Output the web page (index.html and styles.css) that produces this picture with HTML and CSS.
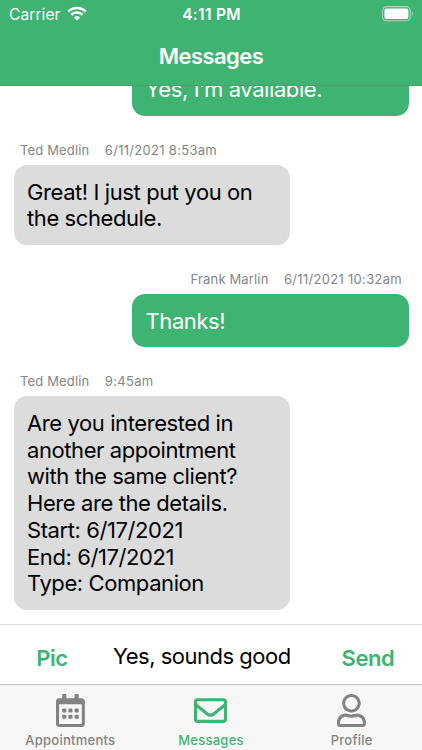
FILE: index.html
```html
<!DOCTYPE html>
<html lang="en">

<head>
    <meta charset="UTF-8" />
    <meta name="viewport" content="width=device-width, initial-scale=1.0" />
    <title>Messages</title>
    <link rel="stylesheet" href="styles.css">
</head>

<body>

    <header>
        <div class="status-bar">
            <div class="carrier">
                <span>Carrier</span>
                <svg class="wifi" viewBox="0 0 20 15">
                    <path d="M1.2 5.6a12.6 12.6 0 0 1 17.6 0" />
                    <path d="M4.3 8.8a8.2 8.2 0 0 1 11.4 0" />
                    <path class="dot" d="M6.9 11.5a4.6 4.6 0 0 1 6.2 0L10 14.6z" />
                </svg>
            </div>
            <div class="clock">4:11 PM</div>
            <div class="battery">
                <svg viewBox="0 0 32 16">
                    <rect class="shell" x="0.6" y="0.6" width="27.6" height="14.2" rx="4" />
                    <rect class="level" x="2.4" y="2.4" width="24" height="10.6" rx="2.2" />
                    <path class="tip" d="M29.8 5.4c1.5.6 1.5 4 0 4.6z" />
                </svg>
            </div>
        </div>
        <h1>Messages</h1>
    </header>

    <main class="chat">
        <div class="message sent">
            <div class="bubble">Yes, I’m available.</div>
        </div>

        <div class="message">
            <div class="meta"><span>Ted Medlin</span><span class="time">6/11/2021 8:53am</span></div>
            <div class="bubble">Great! I just put you on<br />the schedule.</div>
        </div>

        <div class="message sent">
            <div class="meta"><span>Frank Marlin</span><span class="time">6/11/2021 10:32am</span></div>
            <div class="bubble">Thanks!</div>
        </div>

        <div class="message">
            <div class="meta"><span>Ted Medlin</span><span class="time">9:45am</span></div>
            <div class="bubble">
                Are you interested in<br />
                another appointment<br />
                with the same client?<br />
                Here are the details.<br />
                Start: 6/17/2021<br />
                End: 6/17/2021<br />
                Type: Companion
            </div>
        </div>
    </main>

    <div class="composer">
        <button>Pic</button>
        <div class="draft">Yes, sounds good</div>
        <button>Send</button>
    </div>

    <nav class="tabs">
        <a class="tab">
            <svg viewBox="0 0 448 512">
                <path d="M148 288h-40c-6.600 0-12-5.400-12-12v-40c0-6.600 5.400-12 12-12h40c6.600 0 12 5.400 12 12v40c0 6.600-5.400 12-12 12zm108-12v-40c0-6.600-5.400-12-12-12h-40c-6.600 0-12 5.400-12 12v40c0 6.600 5.400 12 12 12h40c6.600 0 12-5.400 12-12zm96 0v-40c0-6.600-5.400-12-12-12h-40c-6.600 0-12 5.400-12 12v40c0 6.600 5.400 12 12 12h40c6.600 0 12-5.400 12-12zm-96 96v-40c0-6.600-5.400-12-12-12h-40c-6.600 0-12 5.400-12 12v40c0 6.600 5.400 12 12 12h40c6.600 0 12-5.400 12-12zm-96 0v-40c0-6.600-5.400-12-12-12h-40c-6.600 0-12 5.400-12 12v40c0 6.600 5.400 12 12 12h40c6.600 0 12-5.400 12-12zm192 0v-40c0-6.600-5.400-12-12-12h-40c-6.600 0-12 5.400-12 12v40c0 6.600 5.400 12 12 12h40c6.600 0 12-5.400 12-12zm96-260v352c0 26.500-21.500 48-48 48H48c-26.500 0-48-21.500-48-48V112c0-26.500 21.500-48 48-48h48V12c0-6.600 5.400-12 12-12h40c6.600 0 12 5.400 12 12v52h128V12c0-6.600 5.400-12 12-12h40c6.600 0 12 5.400 12 12v52h48c26.500 0 48 21.500 48 48zm-48 346V160H48v298c0 3.300 2.700 6 6 6h340c3.300 0 6-2.700 6-6z" />
            </svg>
            <span>Appointments</span>
        </a>
        <a class="tab active">
            <svg viewBox="0 0 512 512">
                <path d="M464 64H48C21.490 64 0 85.490 0 112v288c0 26.510 21.490 48 48 48h416c26.510 0 48-21.490 48-48V112c0-26.510-21.490-48-48-48zm0 48v40.805c-22.422 18.259-58.168 46.651-134.587 106.490-16.841 13.247-50.201 45.072-73.413 44.701-23.208.375-56.579-31.459-73.413-44.701C106.180 199.465 70.425 171.067 48 152.805V112h416zM48 400V214.398c22.914 18.251 55.409 43.862 104.938 82.646 21.857 17.205 60.134 55.186 103.062 54.955 42.717.231 80.509-37.199 103.053-54.947 49.528-38.783 82.032-64.401 104.947-82.653V400H48z" />
            </svg>
            <span>Messages</span>
        </a>
        <a class="tab">
            <svg viewBox="0 0 448 512">
                <path d="M313.600 304c-28.700 0-42.500 16-89.600 16-47.100 0-60.800-16-89.600-16C60.200 304 0 364.200 0 438.400V464c0 26.500 21.500 48 48 48h352c26.500 0 48-21.500 48-48v-25.600c0-74.200-60.200-134.400-134.400-134.400zM400 464H48v-25.600c0-47.600 38.800-86.400 86.400-86.400 14.600 0 38.300 16 89.600 16 51.700 0 74.900-16 89.600-16 47.600 0 86.400 38.800 86.400 86.400V464zM224 288c79.500 0 144-64.500 144-144S303.500 0 224 0 80 64.500 80 144s64.500 144 144 144zm0-240c52.900 0 96 43.100 96 96s-43.100 96-96 96-96-43.100-96-96 43.100-96 96-96z" />
            </svg>
            <span>Profile</span>
        </a>
    </nav>

</body>

</html>
```
FILE: styles.css
```css
* {
    box-sizing: border-box;
}

body {
    margin: 0;
    height: 100vh;
    display: flex;
    flex-direction: column;
    background: #fff;
    color: #000;
    font-family: Inter, "Liberation Sans", sans-serif;
    overflow: hidden;
}

/* header */
header {
    flex: none;
    height: 86px;
    background: #3eb372;
    border-bottom: 1px solid #4f9f6c;
    color: #fff;
}

.status-bar {
    height: 28px;
    padding: 0 8px 0 9px;
    display: grid;
    grid-template-columns: 1fr auto 1fr;
    align-items: center;
    font-size: 15.5px;
}

.carrier {
    display: flex;
    align-items: center;
    gap: 6px;
    letter-spacing: 0.1px;
}

.wifi {
    width: 20px;
    height: 15px;
    margin-top: -2px;
    fill: none;
    stroke: #fff;
    stroke-width: 2.6;
}

.wifi .dot {
    fill: #fff;
    stroke: none;
}

.clock {
    font-weight: 600;
    letter-spacing: 0.3px;
}

.battery {
    justify-self: end;
    height: 16px;
}

.battery svg {
    display: block;
    width: 32px;
    height: 16px;
}

.battery .shell {
    fill: none;
    stroke: #a4dabb;
    stroke-width: 1.1;
}

.battery .level {
    fill: #fff;
}

.battery .tip {
    fill: #a4dabb;
}

h1 {
    margin: 0;
    text-align: center;
    font-size: 22px;
    font-weight: 600;
    line-height: 56px;
    letter-spacing: -0.55px;
}

/* conversation */
.chat {
    flex: 1;
    min-height: 0;
    display: flex;
    flex-direction: column;
    justify-content: flex-end;
    padding: 0 13.5px 14px;
    overflow: hidden;
}

.message {
    flex: none;
    display: flex;
    flex-direction: column;
    align-items: flex-start;
}

.message.sent {
    align-items: flex-end;
}

.meta {
    display: flex;
    gap: 15.5px;
    padding: 26px 6.5px 6px;
    font-size: 13px;
    line-height: 17px;
    letter-spacing: 0.15px;
    color: #858585;
}

.meta .time {
    letter-spacing: 0.3px;
}

.bubble {
    width: 276.5px;
    padding: 13.8px 13.5px 12.8px;
    border-radius: 13px;
    background: #dcdcdc;
    font-size: 22px;
    line-height: 26.75px;
    letter-spacing: -0.41px;
}

.sent .bubble {
    background: #3eb372;
    color: #fff;
}

/* text entry */
.composer {
    flex: none;
    height: 60px;
    border-top: 1px solid #dedede;
    display: grid;
    grid-template-columns: 104px 1fr 108px;
    align-items: center;
}

.composer button {
    padding: 7px 0 0;
    border: none;
    background: none;
    color: #3eb372;
    font-family: inherit;
    font-size: 22px;
    font-weight: 600;
    letter-spacing: -0.4px;
}

.draft {
    padding: 3px 0 0 9px;
    font-size: 22px;
    letter-spacing: -0.5px;
    white-space: nowrap;
}

/* bottom tabs */
.tabs {
    flex: none;
    height: 66px;
    border-top: 1px solid #c8c8c8;
    background: #f7f7f7;
    display: grid;
    grid-template-columns: repeat(3, 1fr);
}

.tab {
    display: flex;
    flex-direction: column;
    align-items: center;
    padding-top: 8.5px;
    color: #838383;
    font-size: 13px;
    font-weight: 500;
    letter-spacing: 0.25px;
}

.tab.active {
    color: #3eb372;
}

.tab svg {
    height: 33px;
    fill: currentColor;
}

.tab span {
    margin-top: 4px;
    line-height: 18px;
}
```
